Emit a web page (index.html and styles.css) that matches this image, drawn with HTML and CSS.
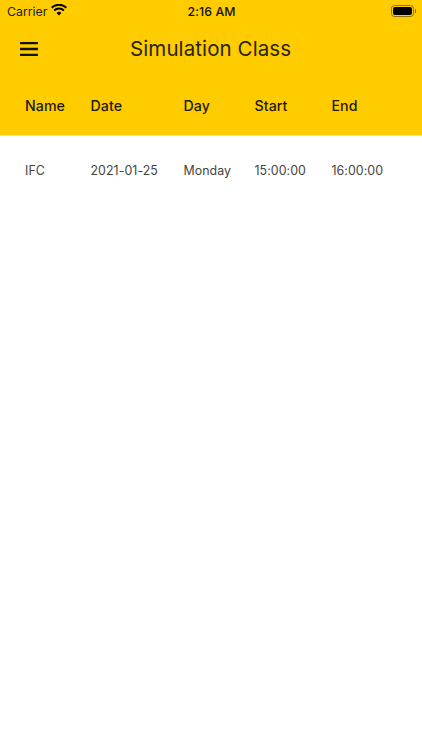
FILE: index.html
```html
<!DOCTYPE html>
<html lang="en">
<head>
<meta charset="utf-8">
<title>Simulation Class</title>
<link rel="stylesheet" href="styles.css">
</head>
<body>
<header class="header">
  <div class="status">
    <div class="status-left">
      <span>Carrier</span>
      <svg class="wifi" viewBox="0 0 16 12" width="16" height="12"><path d="M8 11.6 5.6 9a3.4 3.4 0 0 1 4.8 0Z M3.9 7.3 2.4 5.7a8 8 0 0 1 11.2 0l-1.5 1.6a5.8 5.8 0 0 0-8.2 0Z M1.2 4.5 0 3.1a11.4 11.4 0 0 1 16 0l-1.2 1.4a9.6 9.6 0 0 0-13.6 0Z" fill="#000"/></svg>
    </div>
    <span class="clock">2:16 AM</span>
    <div class="battery"><span class="battery-body"><span class="battery-fill"></span></span><span class="battery-cap"></span></div>
  </div>
  <div class="appbar">
    <svg class="menu" viewBox="0 0 18 14" width="18" height="14"><path d="M0 1.2h18M0 7h18M0 12.8h18" stroke="#14120a" stroke-width="2.3" fill="none"/></svg>
    <h1 class="title">Simulation Class</h1>
  </div>
  <div class="row head-row">
    <span class="c1">Name</span><span class="c2">Date</span><span class="c3">Day</span><span class="c4">Start</span><span class="c5">End</span>
  </div>
</header>
<main>
  <div class="row data-row">
    <span class="c1">IFC</span><span class="c2">2021-01-25</span><span class="c3">Monday</span><span class="c4">15:00:00</span><span class="c5">16:00:00</span>
  </div>
</main>
</body>
</html>
```
FILE: styles.css
```css
* { box-sizing: border-box; }
html, body { margin: 0; height: 100%; }
body { background: #fff; font-family: Inter, "Liberation Sans", sans-serif; color: #222; overflow: hidden; }
.header { background: #ffcc00; height: 135px; box-shadow: 0 1px 1px rgba(120,100,0,.18); }
.status { height: 22px; padding: 0 6px 0 7px; display: grid; grid-template-columns: 1fr auto 1fr; align-items: center; font-size: 12.3px; color: #111; }
.status-left { display: flex; align-items: center; gap: 4px; color: #222; }
.wifi { margin-top: -3px; }
.clock { font-weight: 500; letter-spacing: .1px; }
.battery { justify-self: end; display: flex; align-items: center; gap: 1px; }
.battery-body { width: 23px; height: 12px; border: 1px solid #8a7212; border-radius: 3.5px; padding: 1px; display: block; }
.battery-fill { display: block; height: 100%; background: #000; border-radius: 2px; }
.battery-cap { width: 1px; height: 4px; background: #8a7212; }
.appbar { height: 55px; padding-left: 20px; display: flex; align-items: center; }
.menu { margin-top: -1px; }
.title { margin: -2px 0 0 92px; font-size: 20.5px; font-weight: 400; color: #2a2410; letter-spacing: .1px; }
.row { display: flex; padding-left: 25px; }
.head-row { padding-top: 20px; font-weight: 500; font-size: 14.2px; letter-spacing: .05px; color: #1e1a08; }
.data-row { padding-top: 28px; font-size: 12.4px; letter-spacing: .05px; color: #444; }
.c1 { width: 65.5px; }
.c2 { width: 93px; }
.c3 { width: 71px; }
.c4 { width: 77px; }
```
